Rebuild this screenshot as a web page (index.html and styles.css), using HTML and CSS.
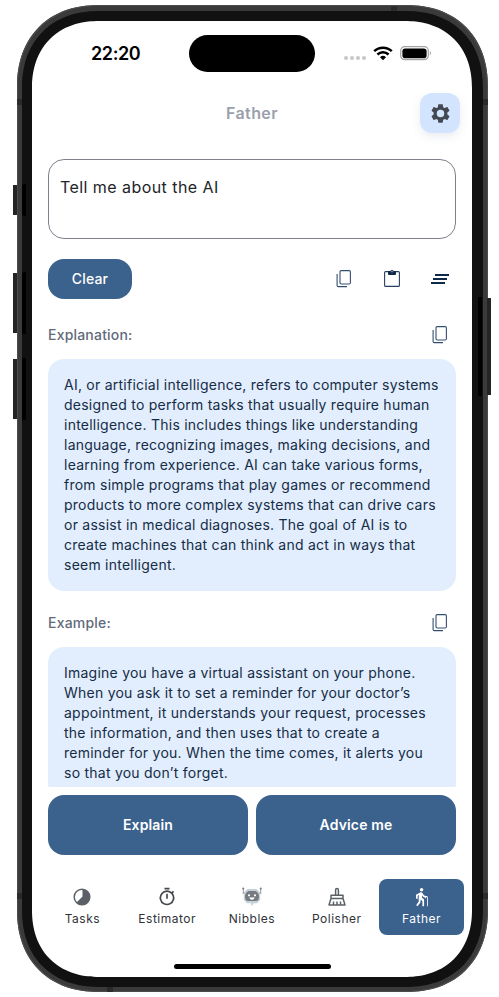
FILE: index.html
```html
<!DOCTYPE html>
<html lang="en">
<head>
<meta charset="utf-8">
<title>Father</title>
<link rel="stylesheet" href="styles.css">
</head>
<body>
<svg class="defs" width="0" height="0" aria-hidden="true">
  <symbol id="copy" viewBox="0 0 24 24">
    <rect x="8" y="3.6" width="10.4" height="13.4" rx="1.2" fill="none" stroke="#35506f" stroke-width="1.1"/>
    <path d="M5.1 7v11.4c0 .7.5 1.2 1.2 1.2H15" fill="none" stroke="#35506f" stroke-width="1.1"/>
  </symbol>
</svg>
<div class="phone">
  <i class="key key-action"></i><i class="key key-up"></i><i class="key key-down"></i><i class="key key-power"></i>
  <i class="seam seam-tl"></i><i class="seam seam-tr"></i><i class="seam seam-bl"></i><i class="seam seam-br"></i>
  <i class="band band-top"></i><i class="band band-bottom"></i>
  <div class="bezel">
    <div class="screen">
      <div class="status">
        <span class="time">22:20</span>
        <span class="island"></span>
        <span class="signals">
          <svg width="24" height="6" viewBox="0 0 24 6" fill="#c9c9cb"><circle cx="3" cy="3" r="2.1"/><circle cx="9" cy="3" r="2.1"/><circle cx="15" cy="3" r="2.1"/><circle cx="21" cy="3" r="2.1"/></svg>
          <svg class="wifi" width="20" height="15" viewBox="0 0 20 15"><path d="M1.2 5.2a12.8 12.8 0 0 1 17.6 0M4.4 8.5a8.2 8.2 0 0 1 11.2 0" fill="none" stroke="#000" stroke-width="2.5"/><path d="M10 14.3l-3-3a4.3 4.3 0 0 1 6 0z"/></svg>
          <svg class="battery" width="32" height="15" viewBox="0 0 32 15"><rect x=".7" y=".7" width="27.6" height="13" rx="4" fill="none" stroke="#a3a3a3" stroke-width="1.2"/><rect x="2.4" y="2.4" width="24.2" height="9.8" rx="2.8"/><path d="M29.8 5c1.5.6 1.5 3.8 0 4.4z" fill="#a3a3a3"/></svg>
        </span>
      </div>
      <header class="header">
        <h1>Father</h1>
        <button class="gear" aria-label="Settings"><svg width="23" height="23" viewBox="0 0 24 24" fill="#434851"><path d="M19.14 12.94c.04-.3.06-.61.06-.94 0-.32-.02-.64-.07-.94l2.03-1.58c.18-.14.23-.41.12-.61l-1.92-3.32c-.12-.22-.37-.29-.59-.22l-2.39.96c-.5-.38-1.03-.7-1.62-.94l-.36-2.54c-.04-.24-.24-.41-.48-.41h-3.84c-.24 0-.43.17-.47.41l-.36 2.54c-.59.24-1.13.57-1.62.94l-2.39-.96c-.22-.08-.47 0-.59.22L2.74 8.87c-.12.21-.08.47.12.61l2.03 1.58c-.05.3-.09.63-.09.94s.02.64.07.94l-2.03 1.58c-.18.14-.23.41-.12.61l1.92 3.32c.12.22.37.29.59.22l2.39-.96c.5.38 1.03.7 1.62.94l.36 2.54c.05.24.24.41.48.41h3.84c.24 0 .44-.17.47-.41l.36-2.54c.59-.24 1.13-.56 1.62-.94l2.39.96c.22.08.47 0 .59-.22l1.92-3.32c.12-.22.07-.47-.12-.61zM12 15.9A3.9 3.9 0 1 1 12 8.1a3.9 3.9 0 0 1 0 7.8z"/></svg></button>
      </header>
      <main class="content">
        <div class="prompt">Tell me about the AI</div>
        <div class="tools">
          <button class="clear">Clear</button>
          <svg class="tool" width="24" height="24"><use href="#copy"/></svg>
          <svg class="tool" width="24" height="24" viewBox="0 0 24 24" fill="none"><rect x="4.6" y="4.6" width="14.8" height="14.8" rx="1" stroke="#27425f" stroke-width="1.1"/><path d="M8 4.2h2.4a1.7 1.7 0 0 1 3.2 0H16V7q0 .9-.9.9H8.9Q8 7.900 8 7z" fill="#0d2b49"/><circle cx="12" cy="4.700" r=".6" fill="#fff"/></svg>
          <svg class="tool" width="24" height="24" viewBox="0 0 24 24" fill="#0d2b49"><path d="M7 7h14v2H7zM5 11h14v2H5zM3 15h14v2H3z"/></svg>
        </div>
        <div class="label"><span>Explanation:</span><svg width="24" height="24"><use href="#copy"/></svg></div>
        <section class="card">AI, or artificial intelligence, refers to computer systems<br>designed to perform tasks that usually require human<br>intelligence. This includes things like understanding<br>language, recognizing images, making decisions, and<br>learning from experience. AI can take various forms,<br>from simple programs that play games or recommend<br>products to more complex systems that can drive cars<br>or assist in medical diagnoses. The goal of AI is to<br>create machines that can think and act in ways that<br>seem intelligent.</section>
        <div class="label"><span>Example:</span><svg width="24" height="24"><use href="#copy"/></svg></div>
        <section class="card">Imagine you have a virtual assistant on your phone.<br>When you ask it to set a reminder for your doctor’s<br>appointment, it understands your request, processes<br>the information, and then uses that to create a<br>reminder for you. When the time comes, it alerts you<br>so that you don’t forget.</section>
      </main>
      <div class="actions"><button>Explain</button><button>Advice me</button></div>
      <nav class="nav">
        <a><svg width="20" height="20" viewBox="0 0 20 20"><circle cx="10" cy="10" r="7.8" fill="#fff" stroke="#5b6066" stroke-width="1.5"/><path d="M10.500 2.200A7.900 7.900 0 1 1 4.500 15.600L10.500 9.600z" fill="#5b6066"/></svg><span>Tasks</span></a>
        <a><svg width="20" height="20" viewBox="0 0 24 24" fill="#43464c"><path d="M9 1h6v2H9zM11 8h2v6h-2zM19.03 7.39l1.42-1.42c-.43-.51-.9-.99-1.41-1.41l-1.42 1.42A8.96 8.96 0 0 0 12 4a9 9 0 1 0 7.03 3.39zM12 20a7 7 0 1 1 0-14 7 7 0 0 1 0 14z"/></svg><span>Estimator</span></a>
        <a><svg width="20" height="20" viewBox="0 0 20 20"><path d="M5.500 2h9l3.700 3.500v7.500l-3.200 3.200h-3.200L9.500 19.300l-.5-3.100H5L1.800 13V5.500z" fill="#c6d1d7"/><path d="M1.300 1v6M18.700 1v6" stroke="#85898d" stroke-width=".9"/><circle cx="1.300" cy="1.500" r="1" fill="#777"/><circle cx="18.700" cy="1.500" r="1" fill="#777"/><path d="M6.500 4h7q3.500 1.500 3.500 5.500 0 4.500-3 4.500H6q-3 0-3-4.500Q3 5.500 6.500 4z" fill="#777b7f"/><circle cx="7" cy="8.300" r="1.100" fill="#fff"/><circle cx="13" cy="8.300" r="1.100" fill="#fff"/><path d="M7.300 10.500h5.400q-.5 2.200-2.700 2.200t-2.700-2.200z" fill="#fff"/></svg><span>Nibbles</span></a>
        <a><svg width="20" height="20" viewBox="0 0 20 20" fill="none" stroke="#5b6066" stroke-width="1.500" stroke-linejoin="round"><path d="M8.600 8.300V2.900a1.400 1.400 0 0 1 2.800 0v5.400M4 8.300h12v3.200H4zM4 11.500l-2 6.400h16l-2-6.400M6.500 17.500v-3M10 17.500v-3M13.500 17.500v-3"/></svg><span>Polisher</span></a>
        <a class="on"><svg width="20" height="20" viewBox="0 0 24 24" fill="#fff"><circle cx="11.500" cy="3.200" r="2.100"/><path d="M19 12.500V23h-1V12.500c0-.28-.22-.5-.5-.5s-.5.22-.5.5v1h-1v-.69a6 6 0 0 1-3.980-2.700c-.1.6-.2 1.500-.1 2.400L14.500 15v8h-2v-6l-2.100-1.900-.3 3.400L6.600 23 5 21.800l3.100-4.400c-.1-2.600-.2-5.800.3-7.900L6.800 10.400V14h-2V9.300l5-2.800c1.100-.5 2.200-.1 2.700.8.9 1.700 2.200 3.400 4.200 3.600 1.300-.3 2.300.4 2.300 1.600z"/></svg><span>Father</span></a>
      </nav>
      <span class="home"></span>
    </div>
  </div>
</div>
</body>
</html>
```
FILE: styles.css
```css
* { box-sizing: border-box; }
body { margin: 0; background: #fff; font-family: Inter, sans-serif; -webkit-font-smoothing: antialiased; }
button { border: 0; padding: 0; font: inherit; }
.defs { position: absolute; }
.phone {
  position: relative; width: 471px; height: 987px; margin: 5px 0 0 17px;
  padding: 6px 5px 5px; border-radius: 82px; background: #3a3a3a;
  box-shadow: inset 0 0 0 1px #4b4d4b;
}
.bezel { height: 100%; padding: 10px; background: #111; border-radius: 77px; }
.screen {
  display: flex; flex-direction: column; position: relative; overflow: hidden;
  width: 440px; height: 956px; background: #fff; border-radius: 67px;
}
.phone, .bezel, .screen { corner-shape: superellipse(1.15); }
.key { position: absolute; width: 4px; background: #242424; left: -4px; }
.key::after { content: ""; position: absolute; top: -1px; bottom: -1px; left: 9px; width: 4px; background: #000; }
.key-action { top: 180px; height: 30px; }
.key-up { top: 268px; height: 60px; }
.key-down { top: 354px; height: 60px; }
.key-power { left: auto; right: -3px; top: 293px; height: 97px; }
.key-power::after { left: auto; right: 9px; }
.seam { position: absolute; width: 5px; height: 6px; background: #2b2b2b; }
.seam-tl { left: 0; top: 94px; }
.seam-tr { right: 0; top: 94px; }
.seam-bl { left: 0; bottom: 93px; }
.seam-br { right: 0; bottom: 93px; }
.band { position: absolute; width: 6px; height: 5px; background: #2b2b2b; }
.band-top { left: 374px; top: 1px; }
.band-bottom { left: 90px; bottom: 0; }

.status { display: grid; grid-template-columns: 157px 126px 1fr; height: 65px; align-items: center; }
.time { padding-left: 59px; font-size: 18px; font-weight: 600; letter-spacing: -.4px; color: #000; }
.island { height: 37px; border-radius: 19px; background: #000; }
.signals { display: flex; align-items: center; padding-left: 28px; }
.signals svg:first-child { margin-top: 9px; }
.wifi { margin-left: 6px; }
.battery { margin-left: 7px; }

.header { display: flex; align-items: center; justify-content: center; height: 53px; padding-top: 1px; position: relative; }
h1 { margin: 0; font-size: 16px; font-weight: 600; letter-spacing: .4px; color: #9aa0ab; }
.gear {
  position: absolute; right: 12px; top: 7px; width: 40px; height: 40px; display: grid; place-items: center;
  border-radius: 12px; background: #d3e4ff; box-shadow: 0 4px 10px rgba(60, 80, 120, .1);
}
.content { height: 648px; padding: 20px 16px 0; overflow: hidden; color: #152c46; }
.prompt { height: 80px; padding: 15px 11px; border: 1px solid #807f8b; border-radius: 16px; font-size: 16px; line-height: 24px; letter-spacing: .44px; color: #222428; }
.tools { display: flex; align-items: center; height: 40px; margin-top: 20px; padding-right: 4px; gap: 24px; }
.clear { width: 84px; height: 40px; margin-right: auto; padding-bottom: 2px; border-radius: 16px; background: #3b618d; color: #fff; font-size: 14px; font-weight: 450; letter-spacing: .15px; }
.label { display: flex; align-items: center; justify-content: space-between; height: 48px; margin-top: 12px; padding-right: 4px; font-size: 14px; font-weight: 450; letter-spacing: .2px; color: #606a7b; }
.label span { padding-bottom: 2px; }
.card + .label { margin-top: 8px; }
.card { padding: 16px; border-radius: 16px; background: #e2eefd; font-size: 14px; line-height: 20px; letter-spacing: .24px; white-space: nowrap; }
.actions { display: grid; grid-template-columns: 1fr 1fr; gap: 8px; padding: 8px 16px 0; }
.actions button { height: 60px; padding-bottom: 2px; border-radius: 16px; background: #3b618d; color: #fff; font-size: 14px; font-weight: 600; letter-spacing: .15px; }
.nav { display: grid; grid-template-columns: repeat(5, 1fr); padding: 24px 8px 0; }
.nav a { display: flex; flex-direction: column; align-items: center; gap: 3px; height: 56px; padding-top: 8px; border-radius: 8px; font-size: 12px; line-height: 17px; letter-spacing: .5px; color: #303238; }
.nav .on { background: #3b618d; color: #fff; }
.home { width: 157px; height: 5px; margin: 29px 0 0 142px; border-radius: 3px; background: #000; }
```
